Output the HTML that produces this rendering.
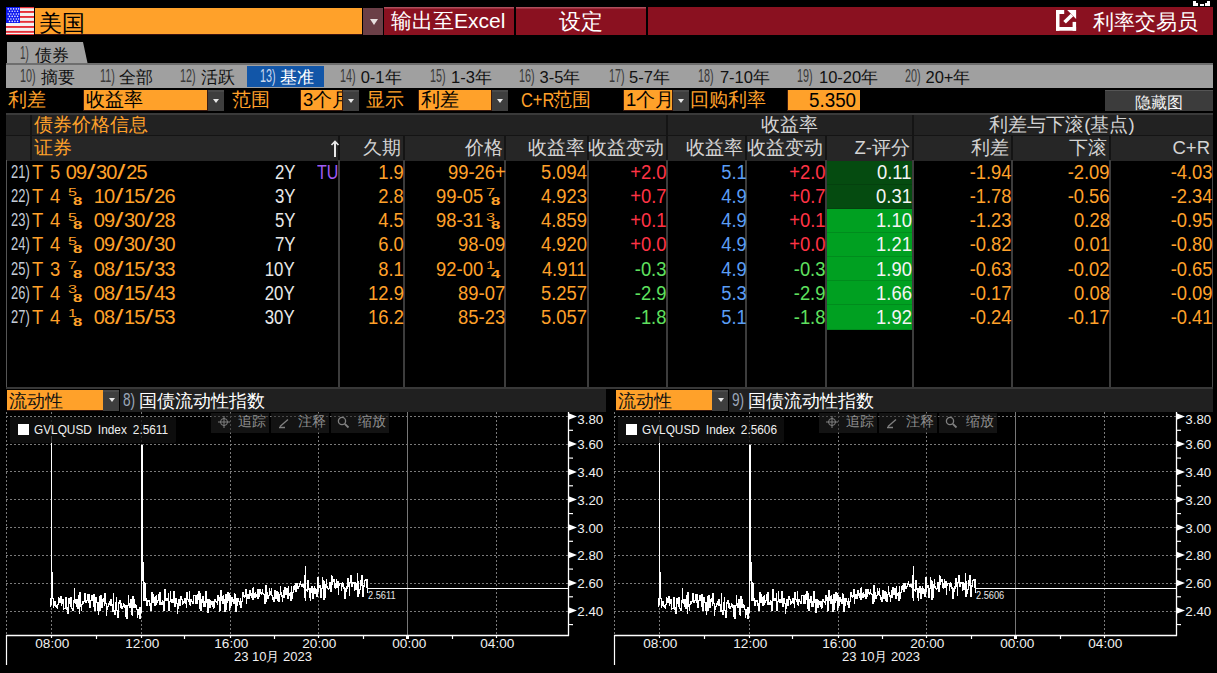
<!DOCTYPE html><html><head><meta charset="utf-8"><style>
*{margin:0;padding:0;box-sizing:border-box}
html,body{width:1217px;height:673px;overflow:hidden;background:#000}
body{position:relative;font-family:"Liberation Sans",sans-serif;color:#fff}
.a{position:absolute;white-space:nowrap}
.l{font-weight:350}
</style></head><body><div class="a" style="left:1193px;top:1px;width:3px;height:5px;background:#fff;"></div>
<div class="a" style="left:1193px;top:3px;width:5px;height:3px;background:#fff;"></div>
<div class="a" style="left:1200px;top:4px;width:4px;height:2px;background:#fff;"></div>
<div class="a" style="left:1207px;top:1px;width:3px;height:5px;background:#fff;"></div>
<div class="a" style="left:1205px;top:3px;width:5px;height:3px;background:#fff;"></div>
<svg class="a" style="left:6px;top:7px" width="28" height="28" viewBox="0 0 28 28"><rect x="0" y="0" width="28" height="28" fill="#f2f2f2"/><rect x="0" y="0" width="28" height="1.2" fill="#e63038"/><rect x="0" y="4" width="28" height="1.9" fill="#e63038"/><rect x="0" y="9" width="28" height="1.9" fill="#e63038"/><rect x="0" y="13.9" width="28" height="1.9" fill="#e63038"/><rect x="0" y="19" width="28" height="1.9" fill="#e63038"/><rect x="0" y="23.9" width="28" height="1.9" fill="#e63038"/><rect x="0" y="27" width="28" height="1" fill="#e63038"/><rect x="0" y="0" width="14" height="16" fill="#0c18f0"/><circle cx="2.2" cy="1.9" r="0.8" fill="#e8e8ff"/><circle cx="4.9" cy="1.9" r="0.8" fill="#e8e8ff"/><circle cx="7.6" cy="1.9" r="0.8" fill="#e8e8ff"/><circle cx="10.3" cy="1.9" r="0.8" fill="#e8e8ff"/><circle cx="12.6" cy="1.9" r="0.8" fill="#e8e8ff"/><circle cx="3.5" cy="4.3" r="0.8" fill="#e8e8ff"/><circle cx="6.2" cy="4.3" r="0.8" fill="#e8e8ff"/><circle cx="8.9" cy="4.3" r="0.8" fill="#e8e8ff"/><circle cx="11.6" cy="4.3" r="0.8" fill="#e8e8ff"/><circle cx="2.2" cy="7" r="0.8" fill="#e8e8ff"/><circle cx="4.9" cy="7" r="0.8" fill="#e8e8ff"/><circle cx="7.6" cy="7" r="0.8" fill="#e8e8ff"/><circle cx="10.3" cy="7" r="0.8" fill="#e8e8ff"/><circle cx="12.6" cy="7" r="0.8" fill="#e8e8ff"/><circle cx="3.5" cy="9.4" r="0.8" fill="#e8e8ff"/><circle cx="6.2" cy="9.4" r="0.8" fill="#e8e8ff"/><circle cx="8.9" cy="9.4" r="0.8" fill="#e8e8ff"/><circle cx="11.6" cy="9.4" r="0.8" fill="#e8e8ff"/><circle cx="2.2" cy="12" r="0.8" fill="#e8e8ff"/><circle cx="4.9" cy="12" r="0.8" fill="#e8e8ff"/><circle cx="7.6" cy="12" r="0.8" fill="#e8e8ff"/><circle cx="10.3" cy="12" r="0.8" fill="#e8e8ff"/><circle cx="12.6" cy="12" r="0.8" fill="#e8e8ff"/><circle cx="3.5" cy="14.4" r="0.8" fill="#e8e8ff"/><circle cx="6.2" cy="14.4" r="0.8" fill="#e8e8ff"/><circle cx="8.9" cy="14.4" r="0.8" fill="#e8e8ff"/><circle cx="11.6" cy="14.4" r="0.8" fill="#e8e8ff"/></svg>
<div class="a" style="left:35px;top:8px;width:327px;height:27px;background:#ffa12a;border-bottom:1px solid #3a1010;"></div>
<div class="a l" style="left:39px;top:11px;font-size:23px;line-height:24px;color:#000;">美国</div>
<div class="a" style="left:363px;top:8px;width:20px;height:27px;background:#6b3f47;"></div>
<div class="a" style="left:369.5px;top:19px;width:0;height:0;border-left:4.0px solid transparent;border-right:4.0px solid transparent;border-top:6px solid #e8e0e0"></div>
<div class="a" style="left:384px;top:7px;width:130px;height:28px;background:linear-gradient(#b65a68 0px,#a8404f 1px,#8a1120 2.5px);"></div>
<div class="a l" style="left:391px;top:9px;font-size:21px;line-height:24px;color:#fff;">输出至Excel</div>
<div class="a" style="left:516px;top:7px;width:130px;height:28px;background:linear-gradient(#b65a68 0px,#a8404f 1px,#8a1120 2.5px);"></div>
<div class="a l" style="left:381.0px;width:400px;top:10px;font-size:21.5px;line-height:24px;color:#fff;text-align:center;">设定</div>
<div class="a" style="left:648px;top:7px;width:565px;height:28px;background:#8a1120;"></div>
<svg class="a" style="left:1055.8px;top:10.1px" width="21" height="21" viewBox="0 0 21 21">
<rect x="0" y="0" width="3.5" height="20.7" fill="#fff"/><rect x="0" y="17" width="20.1" height="3.7" fill="#fff"/>
<rect x="16.6" y="11.9" width="3.5" height="8.8" fill="#fff"/><rect x="0" y="0" width="8.2" height="4" fill="#fff"/>
<path d="M11.2 0 H20.1 V8.9 Z" fill="#fff"/><path d="M8.6 12.3 L16 4.9" stroke="#fff" stroke-width="3.6"/>
</svg>
<div class="a l" style="left:1093px;top:9.5px;font-size:20.5px;line-height:24px;color:#fff;">利率交易员</div>
<svg class="a" style="left:7px;top:42px" width="81" height="21" viewBox="0 0 81 21"><path d="M0 0 H76 L80.5 21 H0 Z" fill="#a0a0a0"/></svg>
<div class="a " style="left:20px;top:42.5px;font-size:18px;line-height:20px;color:#3a3a3a;transform:scaleX(0.55);transform-origin:left center;">1)</div>
<div class="a l" style="left:34.5px;top:44.5px;font-size:16.5px;line-height:20px;color:#111;">债券</div>
<div class="a" style="left:6px;top:63px;width:1207px;height:2px;background:#6e6e6e;"></div>
<div class="a" style="left:6px;top:65px;width:1207px;height:23px;background:#a0a0a0;"></div>
<div class="a" style="left:247px;top:66px;width:77px;height:21px;background:#1256a8;"></div>
<div class="a " style="left:20.3px;top:66px;font-size:18px;line-height:20px;color:#3a3a3a;transform:scaleX(0.6);transform-origin:left center;">10)</div>
<div class="a l" style="left:40.7px;top:67px;font-size:16.5px;line-height:20px;color:#111;">摘要</div>
<div class="a " style="left:100.3px;top:66px;font-size:18px;line-height:20px;color:#3a3a3a;transform:scaleX(0.6);transform-origin:left center;">11)</div>
<div class="a l" style="left:119.3px;top:67px;font-size:16.5px;line-height:20px;color:#111;">全部</div>
<div class="a " style="left:179.5px;top:66px;font-size:18px;line-height:20px;color:#3a3a3a;transform:scaleX(0.6);transform-origin:left center;">12)</div>
<div class="a l" style="left:200.6px;top:67px;font-size:16.5px;line-height:20px;color:#111;">活跃</div>
<div class="a " style="left:259.8px;top:66px;font-size:18px;line-height:20px;color:#c8d8f0;transform:scaleX(0.6);transform-origin:left center;">13)</div>
<div class="a l" style="left:280px;top:67px;font-size:16.5px;line-height:20px;color:#fff;">基准</div>
<div class="a " style="left:339.5px;top:66px;font-size:18px;line-height:20px;color:#3a3a3a;transform:scaleX(0.6);transform-origin:left center;">14)</div>
<div class="a l" style="left:360.7px;top:67px;font-size:16.5px;line-height:20px;color:#111;">0-1年</div>
<div class="a " style="left:429.8px;top:66px;font-size:18px;line-height:20px;color:#3a3a3a;transform:scaleX(0.6);transform-origin:left center;">15)</div>
<div class="a l" style="left:451px;top:67px;font-size:16.5px;line-height:20px;color:#111;">1-3年</div>
<div class="a " style="left:519.3px;top:66px;font-size:18px;line-height:20px;color:#3a3a3a;transform:scaleX(0.6);transform-origin:left center;">16)</div>
<div class="a l" style="left:539.6px;top:67px;font-size:16.5px;line-height:20px;color:#111;">3-5年</div>
<div class="a " style="left:608.8px;top:66px;font-size:18px;line-height:20px;color:#3a3a3a;transform:scaleX(0.6);transform-origin:left center;">17)</div>
<div class="a l" style="left:629px;top:67px;font-size:16.5px;line-height:20px;color:#111;">5-7年</div>
<div class="a " style="left:698.3px;top:66px;font-size:18px;line-height:20px;color:#3a3a3a;transform:scaleX(0.6);transform-origin:left center;">18)</div>
<div class="a l" style="left:719.9px;top:67px;font-size:16.5px;line-height:20px;color:#111;">7-10年</div>
<div class="a " style="left:796.8px;top:66px;font-size:18px;line-height:20px;color:#3a3a3a;transform:scaleX(0.6);transform-origin:left center;">19)</div>
<div class="a l" style="left:819px;top:67px;font-size:16.5px;line-height:20px;color:#111;">10-20年</div>
<div class="a " style="left:904.8px;top:66px;font-size:18px;line-height:20px;color:#3a3a3a;transform:scaleX(0.6);transform-origin:left center;">20)</div>
<div class="a l" style="left:925.5px;top:67px;font-size:16.5px;line-height:20px;color:#111;">20+年</div>
<div class="a l" style="left:8px;top:89px;font-size:18.5px;line-height:22px;color:#ffa12a;">利差</div>
<div class="a l" style="left:83px;top:90px;width:125px;height:21px;background:#ffa12a;border-left:1px solid #3a1a10;border-right:1px solid #3a1a10;border-bottom:1px solid #3a1a10;overflow:hidden;font-size:18.5px;line-height:20px;color:#000;padding-left:2px">收益率</div>
<div class="a" style="left:208px;top:90px;width:15.5px;height:21px;background:linear-gradient(#4a4a4a 0,#4a4a4a 2px,#3e3e3e 2px);"></div>
<div class="a" style="left:212.75px;top:98.7px;width:0;height:0;border-left:3.0px solid transparent;border-right:3.0px solid transparent;border-top:4.5px solid #e8e8e8"></div>
<div class="a l" style="left:232px;top:89px;font-size:18.5px;line-height:22px;color:#ffa12a;">范围</div>
<div class="a l" style="left:300px;top:90px;width:43px;height:21px;background:#ffa12a;border-left:1px solid #3a1a10;border-right:1px solid #3a1a10;border-bottom:1px solid #3a1a10;overflow:hidden;font-size:18.5px;line-height:20px;color:#000;padding-left:2px">3个月</div>
<div class="a" style="left:343px;top:90px;width:15.5px;height:21px;background:linear-gradient(#4a4a4a 0,#4a4a4a 2px,#3e3e3e 2px);"></div>
<div class="a" style="left:347.75px;top:98.7px;width:0;height:0;border-left:3.0px solid transparent;border-right:3.0px solid transparent;border-top:4.5px solid #e8e8e8"></div>
<div class="a l" style="left:366px;top:89px;font-size:18.5px;line-height:22px;color:#ffa12a;">显示</div>
<div class="a l" style="left:418px;top:90px;width:74px;height:21px;background:#ffa12a;border-left:1px solid #3a1a10;border-right:1px solid #3a1a10;border-bottom:1px solid #3a1a10;overflow:hidden;font-size:18.5px;line-height:20px;color:#000;padding-left:2px">利差</div>
<div class="a" style="left:492px;top:90px;width:15.5px;height:21px;background:linear-gradient(#4a4a4a 0,#4a4a4a 2px,#3e3e3e 2px);"></div>
<div class="a" style="left:496.75px;top:98.7px;width:0;height:0;border-left:3.0px solid transparent;border-right:3.0px solid transparent;border-top:4.5px solid #e8e8e8"></div>
<div class="a " style="left:520.5px;top:89px;font-size:20px;line-height:22px;color:#ffa12a;transform:scaleX(0.82);transform-origin:left center;">C+R</div>
<div class="a l" style="left:553px;top:89px;font-size:18.5px;line-height:22px;color:#ffa12a;">范围</div>
<div class="a l" style="left:623px;top:90px;width:50px;height:21px;background:#ffa12a;border-left:1px solid #3a1a10;border-right:1px solid #3a1a10;border-bottom:1px solid #3a1a10;overflow:hidden;font-size:18.5px;line-height:20px;color:#000;padding-left:2px">1个月</div>
<div class="a" style="left:673px;top:90px;width:15.5px;height:21px;background:linear-gradient(#4a4a4a 0,#4a4a4a 2px,#3e3e3e 2px);"></div>
<div class="a" style="left:677.75px;top:98.7px;width:0;height:0;border-left:3.0px solid transparent;border-right:3.0px solid transparent;border-top:4.5px solid #e8e8e8"></div>
<div class="a l" style="left:690px;top:89px;font-size:18.5px;line-height:22px;color:#ffa12a;">回购利率</div>
<div class="a" style="left:787px;top:90px;width:73px;height:21px;background:#ffa12a;border-left:1px solid #3a1a10;border-bottom:1px solid #3a1a10;"></div>
<div class="a " style="right:361px;top:89px;font-size:20px;line-height:22px;color:#000;text-align:right;transform:scaleX(0.94);transform-origin:right center;">5.350</div>
<div class="a" style="left:1105px;top:90px;width:108px;height:21px;background:#3c3c3c;border-top:1px solid #555;"></div>
<div class="a l" style="left:959.0px;width:400px;top:92.5px;font-size:16px;line-height:20px;color:#f4f4f4;text-align:center;">隐藏图</div>
<div class="a" style="left:6px;top:113px;width:1207px;height:2px;background:#3a3a3a;"></div>
<div class="a" style="left:6px;top:115px;width:1207px;height:20px;background:#222;"></div>
<div class="a" style="left:6px;top:135px;width:1207px;height:1px;background:#141414;"></div>
<div class="a" style="left:6px;top:136px;width:1207px;height:25px;background:#262626;"></div>
<div class="a" style="left:6px;top:160px;width:1px;height:227px;background:#555;"></div>
<div class="a" style="left:1212px;top:160px;width:1px;height:227px;background:#4a4a4a;"></div>
<div class="a" style="left:6px;top:387px;width:1207px;height:2px;background:#383838;"></div>
<div class="a" style="left:30px;top:115px;width:2px;height:45px;background:#141414;"></div>
<div class="a" style="left:666px;top:115px;width:2px;height:20px;background:#141414;"></div>
<div class="a" style="left:912px;top:115px;width:2px;height:20px;background:#141414;"></div>
<div class="a" style="left:338px;top:136px;width:2px;height:25px;background:#141414;"></div>
<div class="a" style="left:403px;top:136px;width:2px;height:25px;background:#141414;"></div>
<div class="a" style="left:504px;top:136px;width:2px;height:25px;background:#141414;"></div>
<div class="a" style="left:587px;top:136px;width:2px;height:25px;background:#141414;"></div>
<div class="a" style="left:666px;top:136px;width:2px;height:25px;background:#141414;"></div>
<div class="a" style="left:745px;top:136px;width:2px;height:25px;background:#141414;"></div>
<div class="a" style="left:825px;top:136px;width:2px;height:25px;background:#141414;"></div>
<div class="a" style="left:912px;top:136px;width:2px;height:25px;background:#141414;"></div>
<div class="a" style="left:1011px;top:136px;width:2px;height:25px;background:#141414;"></div>
<div class="a" style="left:1109px;top:136px;width:2px;height:25px;background:#141414;"></div>
<div class="a" style="left:338px;top:160px;width:2px;height:227px;background:#3c3c3c;"></div>
<div class="a" style="left:403px;top:160px;width:2px;height:227px;background:#3c3c3c;"></div>
<div class="a" style="left:504px;top:160px;width:2px;height:227px;background:#3c3c3c;"></div>
<div class="a" style="left:587px;top:160px;width:2px;height:227px;background:#3c3c3c;"></div>
<div class="a" style="left:666px;top:160px;width:2px;height:227px;background:#3c3c3c;"></div>
<div class="a" style="left:745px;top:160px;width:2px;height:227px;background:#3c3c3c;"></div>
<div class="a" style="left:825px;top:160px;width:2px;height:227px;background:#3c3c3c;"></div>
<div class="a" style="left:912px;top:160px;width:2px;height:227px;background:#3c3c3c;"></div>
<div class="a" style="left:1011px;top:160px;width:2px;height:227px;background:#3c3c3c;"></div>
<div class="a" style="left:1109px;top:160px;width:2px;height:227px;background:#3c3c3c;"></div>
<div class="a l" style="left:34px;top:114px;font-size:18.5px;line-height:22px;color:#ffa12a;">债券价格信息</div>
<div class="a l" style="left:589.0px;width:400px;top:114px;font-size:18.5px;line-height:22px;color:#d4d4d4;text-align:center;">收益率</div>
<div class="a l" style="left:862.0px;width:400px;top:114px;font-size:18.5px;line-height:22px;color:#d4d4d4;text-align:center;">利差与下滚(基点)</div>
<div class="a l" style="left:34px;top:137px;font-size:18.5px;line-height:22px;color:#ffa12a;">证券</div>
<svg class="a" style="left:330px;top:140px" width="10" height="18" viewBox="0 0 10 18"><path d="M5 2 V17" stroke="#e8e8e8" stroke-width="2"/><path d="M1.5 5 L5 1.5 L8.5 5" stroke="#e8e8e8" stroke-width="1.6" fill="none"/></svg>
<div class="a l" style="right:816px;top:137px;font-size:18.5px;line-height:22px;color:#d4d4d4;text-align:right;">久期</div>
<div class="a l" style="right:714px;top:137px;font-size:18.5px;line-height:22px;color:#d4d4d4;text-align:right;">价格</div>
<div class="a l" style="right:632px;top:137px;font-size:18.5px;line-height:22px;color:#d4d4d4;text-align:right;">收益率</div>
<div class="a l" style="right:553px;top:137px;font-size:18.5px;line-height:22px;color:#d4d4d4;text-align:right;">收益变动</div>
<div class="a l" style="right:474px;top:137px;font-size:18.5px;line-height:22px;color:#d4d4d4;text-align:right;">收益率</div>
<div class="a l" style="right:394px;top:137px;font-size:18.5px;line-height:22px;color:#d4d4d4;text-align:right;">收益变动</div>
<div class="a l" style="right:307px;top:137px;font-size:18.5px;line-height:22px;color:#d4d4d4;text-align:right;">Z-评分</div>
<div class="a l" style="right:208px;top:137px;font-size:18.5px;line-height:22px;color:#d4d4d4;text-align:right;">利差</div>
<div class="a l" style="right:110px;top:137px;font-size:18.5px;line-height:22px;color:#d4d4d4;text-align:right;">下滚</div>
<div class="a l" style="right:7px;top:137px;font-size:18.5px;line-height:22px;color:#d4d4d4;text-align:right;">C+R</div>
<div class="a" style="left:827px;top:161.0px;width:85px;height:24.1px;background:#054b10;border-bottom:1px solid rgba(0,0,0,0.12);"></div>
<div class="a " style="left:10.5px;top:160.0px;font-size:18.5px;line-height:24px;color:#c4ccd8;transform:scaleX(0.7);transform-origin:left center;">21)</div>
<div class="a " style="left:32px;top:160.0px;font-size:20px;line-height:24px;color:#ffa12a;transform:scaleX(0.92);transform-origin:left center;">T</div>
<div class="a " style="left:49.5px;top:160.0px;font-size:20px;line-height:24px;color:#ffa12a;transform:scaleX(0.92);transform-origin:left center;">5</div>
<div class="a" style="left:65.8px;top:160.0px;font-size:20px;line-height:24px;color:#ffa12a"><span style="display:inline-block;transform:scaleX(0.92)"></span><span style="display:inline-block;width:10.1px;text-align:center">0</span><span style="display:inline-block;width:10.1px;text-align:center">9</span><span style="display:inline-block;width:10.1px;text-align:center;transform:scaleX(1.5)">/</span><span style="display:inline-block;width:10.1px;text-align:center">3</span><span style="display:inline-block;width:10.1px;text-align:center">0</span><span style="display:inline-block;width:10.1px;text-align:center;transform:scaleX(1.5)">/</span><span style="display:inline-block;width:10.1px;text-align:center">2</span><span style="display:inline-block;width:10.1px;text-align:center">5</span></div>
<div class="a " style="right:922px;top:160.0px;font-size:20px;line-height:24px;color:#e8e8e8;text-align:right;transform:scaleX(0.84);transform-origin:right center;">2Y</div>
<div class="a " style="left:317px;top:160.0px;font-size:20px;line-height:24px;color:#a05cf4;transform:scaleX(0.8);transform-origin:left center;">TU</div>
<div class="a " style="right:813px;top:160.0px;font-size:20px;line-height:24px;color:#ffa12a;text-align:right;transform:scaleX(0.92);transform-origin:right center;">1.9</div>
<div class="a " style="right:711.5px;top:160.0px;font-size:20px;line-height:24px;color:#ffa12a;text-align:right;transform:scaleX(0.92);transform-origin:right center;">99-26+</div>
<div class="a " style="right:630px;top:160.0px;font-size:20px;line-height:24px;color:#ffa12a;text-align:right;transform:scaleX(0.92);transform-origin:right center;">5.094</div>
<div class="a " style="right:550.7px;top:160.0px;font-size:20px;line-height:24px;color:#ff3345;text-align:right;transform:scaleX(0.92);transform-origin:right center;">+2.0</div>
<div class="a " style="right:470px;top:160.0px;font-size:20px;line-height:24px;color:#5b9ef5;text-align:right;transform:scaleX(0.92);transform-origin:right center;">5.1</div>
<div class="a " style="right:391.70000000000005px;top:160.0px;font-size:20px;line-height:24px;color:#ff3345;text-align:right;transform:scaleX(0.92);transform-origin:right center;">+2.0</div>
<div class="a " style="right:305.5px;top:160.0px;font-size:20px;line-height:24px;color:#f4f4f4;text-align:right;transform:scaleX(0.92);transform-origin:right center;">0.11</div>
<div class="a " style="right:205px;top:160.0px;font-size:20px;line-height:24px;color:#ffa12a;text-align:right;transform:scaleX(0.92);transform-origin:right center;">-1.94</div>
<div class="a " style="right:107px;top:160.0px;font-size:20px;line-height:24px;color:#ffa12a;text-align:right;transform:scaleX(0.92);transform-origin:right center;">-2.09</div>
<div class="a " style="right:4px;top:160.0px;font-size:20px;line-height:24px;color:#ffa12a;text-align:right;transform:scaleX(0.92);transform-origin:right center;">-4.03</div>
<div class="a" style="left:827px;top:185.07px;width:85px;height:24.1px;background:#054b10;border-bottom:1px solid rgba(0,0,0,0.12);"></div>
<div class="a " style="left:10.5px;top:184.15px;font-size:18.5px;line-height:24px;color:#c4ccd8;transform:scaleX(0.7);transform-origin:left center;">22)</div>
<div class="a " style="left:32px;top:184.15px;font-size:20px;line-height:24px;color:#ffa12a;transform:scaleX(0.92);transform-origin:left center;">T</div>
<div class="a " style="left:49.5px;top:184.15px;font-size:20px;line-height:24px;color:#ffa12a;transform:scaleX(0.92);transform-origin:left center;">4</div>
<div class="a" style="left:67.8px;top:186.45000000000002px;font-size:11.5px;line-height:12px;color:#ffa12a;transform:scaleX(1.4);transform-origin:left center">5</div>
<div class="a" style="left:73.2px;top:195.15px;font-size:11.5px;line-height:12px;color:#ffa12a;font-weight:bold;transform:scaleX(1.45);transform-origin:left center">8</div>
<div class="a" style="left:93.8px;top:184.15px;font-size:20px;line-height:24px;color:#ffa12a"><span style="display:inline-block;transform:scaleX(0.92)"></span><span style="display:inline-block;width:10.1px;text-align:center">1</span><span style="display:inline-block;width:10.1px;text-align:center">0</span><span style="display:inline-block;width:10.1px;text-align:center;transform:scaleX(1.5)">/</span><span style="display:inline-block;width:10.1px;text-align:center">1</span><span style="display:inline-block;width:10.1px;text-align:center">5</span><span style="display:inline-block;width:10.1px;text-align:center;transform:scaleX(1.5)">/</span><span style="display:inline-block;width:10.1px;text-align:center">2</span><span style="display:inline-block;width:10.1px;text-align:center">6</span></div>
<div class="a " style="right:922px;top:184.15px;font-size:20px;line-height:24px;color:#e8e8e8;text-align:right;transform:scaleX(0.84);transform-origin:right center;">3Y</div>
<div class="a " style="right:813px;top:184.15px;font-size:20px;line-height:24px;color:#ffa12a;text-align:right;transform:scaleX(0.92);transform-origin:right center;">2.8</div>
<div class="a " style="right:733.5px;top:184.15px;font-size:20px;line-height:24px;color:#ffa12a;text-align:right;transform:scaleX(0.92);transform-origin:right center;">99-05</div>
<div class="a" style="left:485.8px;top:186.45000000000002px;font-size:11.5px;line-height:12px;color:#ffa12a;transform:scaleX(1.4);transform-origin:left center">7</div>
<div class="a" style="left:491.2px;top:195.15px;font-size:11.5px;line-height:12px;color:#ffa12a;font-weight:bold;transform:scaleX(1.45);transform-origin:left center">8</div>
<div class="a " style="right:630px;top:184.15px;font-size:20px;line-height:24px;color:#ffa12a;text-align:right;transform:scaleX(0.92);transform-origin:right center;">4.923</div>
<div class="a " style="right:550.7px;top:184.15px;font-size:20px;line-height:24px;color:#ff3345;text-align:right;transform:scaleX(0.92);transform-origin:right center;">+0.7</div>
<div class="a " style="right:470px;top:184.15px;font-size:20px;line-height:24px;color:#5b9ef5;text-align:right;transform:scaleX(0.92);transform-origin:right center;">4.9</div>
<div class="a " style="right:391.70000000000005px;top:184.15px;font-size:20px;line-height:24px;color:#ff3345;text-align:right;transform:scaleX(0.92);transform-origin:right center;">+0.7</div>
<div class="a " style="right:305.5px;top:184.15px;font-size:20px;line-height:24px;color:#f4f4f4;text-align:right;transform:scaleX(0.92);transform-origin:right center;">0.31</div>
<div class="a " style="right:205px;top:184.15px;font-size:20px;line-height:24px;color:#ffa12a;text-align:right;transform:scaleX(0.92);transform-origin:right center;">-1.78</div>
<div class="a " style="right:107px;top:184.15px;font-size:20px;line-height:24px;color:#ffa12a;text-align:right;transform:scaleX(0.92);transform-origin:right center;">-0.56</div>
<div class="a " style="right:4px;top:184.15px;font-size:20px;line-height:24px;color:#ffa12a;text-align:right;transform:scaleX(0.92);transform-origin:right center;">-2.34</div>
<div class="a" style="left:827px;top:209.14px;width:85px;height:24.1px;background:#00a021;border-bottom:1px solid rgba(0,0,0,0.12);"></div>
<div class="a " style="left:10.5px;top:208.3px;font-size:18.5px;line-height:24px;color:#c4ccd8;transform:scaleX(0.7);transform-origin:left center;">23)</div>
<div class="a " style="left:32px;top:208.3px;font-size:20px;line-height:24px;color:#ffa12a;transform:scaleX(0.92);transform-origin:left center;">T</div>
<div class="a " style="left:49.5px;top:208.3px;font-size:20px;line-height:24px;color:#ffa12a;transform:scaleX(0.92);transform-origin:left center;">4</div>
<div class="a" style="left:67.8px;top:210.60000000000002px;font-size:11.5px;line-height:12px;color:#ffa12a;transform:scaleX(1.4);transform-origin:left center">5</div>
<div class="a" style="left:73.2px;top:219.3px;font-size:11.5px;line-height:12px;color:#ffa12a;font-weight:bold;transform:scaleX(1.45);transform-origin:left center">8</div>
<div class="a" style="left:93.8px;top:208.3px;font-size:20px;line-height:24px;color:#ffa12a"><span style="display:inline-block;transform:scaleX(0.92)"></span><span style="display:inline-block;width:10.1px;text-align:center">0</span><span style="display:inline-block;width:10.1px;text-align:center">9</span><span style="display:inline-block;width:10.1px;text-align:center;transform:scaleX(1.5)">/</span><span style="display:inline-block;width:10.1px;text-align:center">3</span><span style="display:inline-block;width:10.1px;text-align:center">0</span><span style="display:inline-block;width:10.1px;text-align:center;transform:scaleX(1.5)">/</span><span style="display:inline-block;width:10.1px;text-align:center">2</span><span style="display:inline-block;width:10.1px;text-align:center">8</span></div>
<div class="a " style="right:922px;top:208.3px;font-size:20px;line-height:24px;color:#e8e8e8;text-align:right;transform:scaleX(0.84);transform-origin:right center;">5Y</div>
<div class="a " style="right:813px;top:208.3px;font-size:20px;line-height:24px;color:#ffa12a;text-align:right;transform:scaleX(0.92);transform-origin:right center;">4.5</div>
<div class="a " style="right:733.5px;top:208.3px;font-size:20px;line-height:24px;color:#ffa12a;text-align:right;transform:scaleX(0.92);transform-origin:right center;">98-31</div>
<div class="a" style="left:485.8px;top:210.60000000000002px;font-size:11.5px;line-height:12px;color:#ffa12a;transform:scaleX(1.4);transform-origin:left center">3</div>
<div class="a" style="left:491.2px;top:219.3px;font-size:11.5px;line-height:12px;color:#ffa12a;font-weight:bold;transform:scaleX(1.45);transform-origin:left center">8</div>
<div class="a " style="right:630px;top:208.3px;font-size:20px;line-height:24px;color:#ffa12a;text-align:right;transform:scaleX(0.92);transform-origin:right center;">4.859</div>
<div class="a " style="right:550.7px;top:208.3px;font-size:20px;line-height:24px;color:#ff3345;text-align:right;transform:scaleX(0.92);transform-origin:right center;">+0.1</div>
<div class="a " style="right:470px;top:208.3px;font-size:20px;line-height:24px;color:#5b9ef5;text-align:right;transform:scaleX(0.92);transform-origin:right center;">4.9</div>
<div class="a " style="right:391.70000000000005px;top:208.3px;font-size:20px;line-height:24px;color:#ff3345;text-align:right;transform:scaleX(0.92);transform-origin:right center;">+0.1</div>
<div class="a " style="right:305.5px;top:208.3px;font-size:20px;line-height:24px;color:#f4f4f4;text-align:right;transform:scaleX(0.92);transform-origin:right center;">1.10</div>
<div class="a " style="right:205px;top:208.3px;font-size:20px;line-height:24px;color:#ffa12a;text-align:right;transform:scaleX(0.92);transform-origin:right center;">-1.23</div>
<div class="a " style="right:107px;top:208.3px;font-size:20px;line-height:24px;color:#ffa12a;text-align:right;transform:scaleX(0.92);transform-origin:right center;">0.28</div>
<div class="a " style="right:4px;top:208.3px;font-size:20px;line-height:24px;color:#ffa12a;text-align:right;transform:scaleX(0.92);transform-origin:right center;">-0.95</div>
<div class="a" style="left:827px;top:233.21px;width:85px;height:24.1px;background:#00a021;border-bottom:1px solid rgba(0,0,0,0.12);"></div>
<div class="a " style="left:10.5px;top:232.45px;font-size:18.5px;line-height:24px;color:#c4ccd8;transform:scaleX(0.7);transform-origin:left center;">24)</div>
<div class="a " style="left:32px;top:232.45px;font-size:20px;line-height:24px;color:#ffa12a;transform:scaleX(0.92);transform-origin:left center;">T</div>
<div class="a " style="left:49.5px;top:232.45px;font-size:20px;line-height:24px;color:#ffa12a;transform:scaleX(0.92);transform-origin:left center;">4</div>
<div class="a" style="left:67.8px;top:234.75px;font-size:11.5px;line-height:12px;color:#ffa12a;transform:scaleX(1.4);transform-origin:left center">5</div>
<div class="a" style="left:73.2px;top:243.45px;font-size:11.5px;line-height:12px;color:#ffa12a;font-weight:bold;transform:scaleX(1.45);transform-origin:left center">8</div>
<div class="a" style="left:93.8px;top:232.45px;font-size:20px;line-height:24px;color:#ffa12a"><span style="display:inline-block;transform:scaleX(0.92)"></span><span style="display:inline-block;width:10.1px;text-align:center">0</span><span style="display:inline-block;width:10.1px;text-align:center">9</span><span style="display:inline-block;width:10.1px;text-align:center;transform:scaleX(1.5)">/</span><span style="display:inline-block;width:10.1px;text-align:center">3</span><span style="display:inline-block;width:10.1px;text-align:center">0</span><span style="display:inline-block;width:10.1px;text-align:center;transform:scaleX(1.5)">/</span><span style="display:inline-block;width:10.1px;text-align:center">3</span><span style="display:inline-block;width:10.1px;text-align:center">0</span></div>
<div class="a " style="right:922px;top:232.45px;font-size:20px;line-height:24px;color:#e8e8e8;text-align:right;transform:scaleX(0.84);transform-origin:right center;">7Y</div>
<div class="a " style="right:813px;top:232.45px;font-size:20px;line-height:24px;color:#ffa12a;text-align:right;transform:scaleX(0.92);transform-origin:right center;">6.0</div>
<div class="a " style="right:711.5px;top:232.45px;font-size:20px;line-height:24px;color:#ffa12a;text-align:right;transform:scaleX(0.92);transform-origin:right center;">98-09</div>
<div class="a " style="right:630px;top:232.45px;font-size:20px;line-height:24px;color:#ffa12a;text-align:right;transform:scaleX(0.92);transform-origin:right center;">4.920</div>
<div class="a " style="right:550.7px;top:232.45px;font-size:20px;line-height:24px;color:#ff3345;text-align:right;transform:scaleX(0.92);transform-origin:right center;">+0.0</div>
<div class="a " style="right:470px;top:232.45px;font-size:20px;line-height:24px;color:#5b9ef5;text-align:right;transform:scaleX(0.92);transform-origin:right center;">4.9</div>
<div class="a " style="right:391.70000000000005px;top:232.45px;font-size:20px;line-height:24px;color:#ff3345;text-align:right;transform:scaleX(0.92);transform-origin:right center;">+0.0</div>
<div class="a " style="right:305.5px;top:232.45px;font-size:20px;line-height:24px;color:#f4f4f4;text-align:right;transform:scaleX(0.92);transform-origin:right center;">1.21</div>
<div class="a " style="right:205px;top:232.45px;font-size:20px;line-height:24px;color:#ffa12a;text-align:right;transform:scaleX(0.92);transform-origin:right center;">-0.82</div>
<div class="a " style="right:107px;top:232.45px;font-size:20px;line-height:24px;color:#ffa12a;text-align:right;transform:scaleX(0.92);transform-origin:right center;">0.01</div>
<div class="a " style="right:4px;top:232.45px;font-size:20px;line-height:24px;color:#ffa12a;text-align:right;transform:scaleX(0.92);transform-origin:right center;">-0.80</div>
<div class="a" style="left:827px;top:257.28px;width:85px;height:24.1px;background:#00a021;border-bottom:1px solid rgba(0,0,0,0.12);"></div>
<div class="a " style="left:10.5px;top:256.6px;font-size:18.5px;line-height:24px;color:#c4ccd8;transform:scaleX(0.7);transform-origin:left center;">25)</div>
<div class="a " style="left:32px;top:256.6px;font-size:20px;line-height:24px;color:#ffa12a;transform:scaleX(0.92);transform-origin:left center;">T</div>
<div class="a " style="left:49.5px;top:256.6px;font-size:20px;line-height:24px;color:#ffa12a;transform:scaleX(0.92);transform-origin:left center;">3</div>
<div class="a" style="left:67.8px;top:258.90000000000003px;font-size:11.5px;line-height:12px;color:#ffa12a;transform:scaleX(1.4);transform-origin:left center">7</div>
<div class="a" style="left:73.2px;top:267.6px;font-size:11.5px;line-height:12px;color:#ffa12a;font-weight:bold;transform:scaleX(1.45);transform-origin:left center">8</div>
<div class="a" style="left:93.8px;top:256.6px;font-size:20px;line-height:24px;color:#ffa12a"><span style="display:inline-block;transform:scaleX(0.92)"></span><span style="display:inline-block;width:10.1px;text-align:center">0</span><span style="display:inline-block;width:10.1px;text-align:center">8</span><span style="display:inline-block;width:10.1px;text-align:center;transform:scaleX(1.5)">/</span><span style="display:inline-block;width:10.1px;text-align:center">1</span><span style="display:inline-block;width:10.1px;text-align:center">5</span><span style="display:inline-block;width:10.1px;text-align:center;transform:scaleX(1.5)">/</span><span style="display:inline-block;width:10.1px;text-align:center">3</span><span style="display:inline-block;width:10.1px;text-align:center">3</span></div>
<div class="a " style="right:922px;top:256.6px;font-size:20px;line-height:24px;color:#e8e8e8;text-align:right;transform:scaleX(0.84);transform-origin:right center;">10Y</div>
<div class="a " style="right:813px;top:256.6px;font-size:20px;line-height:24px;color:#ffa12a;text-align:right;transform:scaleX(0.92);transform-origin:right center;">8.1</div>
<div class="a " style="right:733.5px;top:256.6px;font-size:20px;line-height:24px;color:#ffa12a;text-align:right;transform:scaleX(0.92);transform-origin:right center;">92-00</div>
<div class="a" style="left:485.8px;top:258.90000000000003px;font-size:11.5px;line-height:12px;color:#ffa12a;transform:scaleX(1.4);transform-origin:left center">1</div>
<div class="a" style="left:491.2px;top:267.6px;font-size:11.5px;line-height:12px;color:#ffa12a;font-weight:bold;transform:scaleX(1.45);transform-origin:left center">4</div>
<div class="a " style="right:630px;top:256.6px;font-size:20px;line-height:24px;color:#ffa12a;text-align:right;transform:scaleX(0.92);transform-origin:right center;">4.911</div>
<div class="a " style="right:550.7px;top:256.6px;font-size:20px;line-height:24px;color:#5fe05f;text-align:right;transform:scaleX(0.92);transform-origin:right center;">-0.3</div>
<div class="a " style="right:470px;top:256.6px;font-size:20px;line-height:24px;color:#5b9ef5;text-align:right;transform:scaleX(0.92);transform-origin:right center;">4.9</div>
<div class="a " style="right:391.70000000000005px;top:256.6px;font-size:20px;line-height:24px;color:#5fe05f;text-align:right;transform:scaleX(0.92);transform-origin:right center;">-0.3</div>
<div class="a " style="right:305.5px;top:256.6px;font-size:20px;line-height:24px;color:#f4f4f4;text-align:right;transform:scaleX(0.92);transform-origin:right center;">1.90</div>
<div class="a " style="right:205px;top:256.6px;font-size:20px;line-height:24px;color:#ffa12a;text-align:right;transform:scaleX(0.92);transform-origin:right center;">-0.63</div>
<div class="a " style="right:107px;top:256.6px;font-size:20px;line-height:24px;color:#ffa12a;text-align:right;transform:scaleX(0.92);transform-origin:right center;">-0.02</div>
<div class="a " style="right:4px;top:256.6px;font-size:20px;line-height:24px;color:#ffa12a;text-align:right;transform:scaleX(0.92);transform-origin:right center;">-0.65</div>
<div class="a" style="left:827px;top:281.35px;width:85px;height:24.1px;background:#00a021;border-bottom:1px solid rgba(0,0,0,0.12);"></div>
<div class="a " style="left:10.5px;top:280.75px;font-size:18.5px;line-height:24px;color:#c4ccd8;transform:scaleX(0.7);transform-origin:left center;">26)</div>
<div class="a " style="left:32px;top:280.75px;font-size:20px;line-height:24px;color:#ffa12a;transform:scaleX(0.92);transform-origin:left center;">T</div>
<div class="a " style="left:49.5px;top:280.75px;font-size:20px;line-height:24px;color:#ffa12a;transform:scaleX(0.92);transform-origin:left center;">4</div>
<div class="a" style="left:67.8px;top:283.05px;font-size:11.5px;line-height:12px;color:#ffa12a;transform:scaleX(1.4);transform-origin:left center">3</div>
<div class="a" style="left:73.2px;top:291.75px;font-size:11.5px;line-height:12px;color:#ffa12a;font-weight:bold;transform:scaleX(1.45);transform-origin:left center">8</div>
<div class="a" style="left:93.8px;top:280.75px;font-size:20px;line-height:24px;color:#ffa12a"><span style="display:inline-block;transform:scaleX(0.92)"></span><span style="display:inline-block;width:10.1px;text-align:center">0</span><span style="display:inline-block;width:10.1px;text-align:center">8</span><span style="display:inline-block;width:10.1px;text-align:center;transform:scaleX(1.5)">/</span><span style="display:inline-block;width:10.1px;text-align:center">1</span><span style="display:inline-block;width:10.1px;text-align:center">5</span><span style="display:inline-block;width:10.1px;text-align:center;transform:scaleX(1.5)">/</span><span style="display:inline-block;width:10.1px;text-align:center">4</span><span style="display:inline-block;width:10.1px;text-align:center">3</span></div>
<div class="a " style="right:922px;top:280.75px;font-size:20px;line-height:24px;color:#e8e8e8;text-align:right;transform:scaleX(0.84);transform-origin:right center;">20Y</div>
<div class="a " style="right:813px;top:280.75px;font-size:20px;line-height:24px;color:#ffa12a;text-align:right;transform:scaleX(0.92);transform-origin:right center;">12.9</div>
<div class="a " style="right:711.5px;top:280.75px;font-size:20px;line-height:24px;color:#ffa12a;text-align:right;transform:scaleX(0.92);transform-origin:right center;">89-07</div>
<div class="a " style="right:630px;top:280.75px;font-size:20px;line-height:24px;color:#ffa12a;text-align:right;transform:scaleX(0.92);transform-origin:right center;">5.257</div>
<div class="a " style="right:550.7px;top:280.75px;font-size:20px;line-height:24px;color:#5fe05f;text-align:right;transform:scaleX(0.92);transform-origin:right center;">-2.9</div>
<div class="a " style="right:470px;top:280.75px;font-size:20px;line-height:24px;color:#5b9ef5;text-align:right;transform:scaleX(0.92);transform-origin:right center;">5.3</div>
<div class="a " style="right:391.70000000000005px;top:280.75px;font-size:20px;line-height:24px;color:#5fe05f;text-align:right;transform:scaleX(0.92);transform-origin:right center;">-2.9</div>
<div class="a " style="right:305.5px;top:280.75px;font-size:20px;line-height:24px;color:#f4f4f4;text-align:right;transform:scaleX(0.92);transform-origin:right center;">1.66</div>
<div class="a " style="right:205px;top:280.75px;font-size:20px;line-height:24px;color:#ffa12a;text-align:right;transform:scaleX(0.92);transform-origin:right center;">-0.17</div>
<div class="a " style="right:107px;top:280.75px;font-size:20px;line-height:24px;color:#ffa12a;text-align:right;transform:scaleX(0.92);transform-origin:right center;">0.08</div>
<div class="a " style="right:4px;top:280.75px;font-size:20px;line-height:24px;color:#ffa12a;text-align:right;transform:scaleX(0.92);transform-origin:right center;">-0.09</div>
<div class="a" style="left:827px;top:305.42px;width:85px;height:24.1px;background:#00a021;border-bottom:1px solid rgba(0,0,0,0.12);"></div>
<div class="a " style="left:10.5px;top:304.9px;font-size:18.5px;line-height:24px;color:#c4ccd8;transform:scaleX(0.7);transform-origin:left center;">27)</div>
<div class="a " style="left:32px;top:304.9px;font-size:20px;line-height:24px;color:#ffa12a;transform:scaleX(0.92);transform-origin:left center;">T</div>
<div class="a " style="left:49.5px;top:304.9px;font-size:20px;line-height:24px;color:#ffa12a;transform:scaleX(0.92);transform-origin:left center;">4</div>
<div class="a" style="left:67.8px;top:307.2px;font-size:11.5px;line-height:12px;color:#ffa12a;transform:scaleX(1.4);transform-origin:left center">1</div>
<div class="a" style="left:73.2px;top:315.9px;font-size:11.5px;line-height:12px;color:#ffa12a;font-weight:bold;transform:scaleX(1.45);transform-origin:left center">8</div>
<div class="a" style="left:93.8px;top:304.9px;font-size:20px;line-height:24px;color:#ffa12a"><span style="display:inline-block;transform:scaleX(0.92)"></span><span style="display:inline-block;width:10.1px;text-align:center">0</span><span style="display:inline-block;width:10.1px;text-align:center">8</span><span style="display:inline-block;width:10.1px;text-align:center;transform:scaleX(1.5)">/</span><span style="display:inline-block;width:10.1px;text-align:center">1</span><span style="display:inline-block;width:10.1px;text-align:center">5</span><span style="display:inline-block;width:10.1px;text-align:center;transform:scaleX(1.5)">/</span><span style="display:inline-block;width:10.1px;text-align:center">5</span><span style="display:inline-block;width:10.1px;text-align:center">3</span></div>
<div class="a " style="right:922px;top:304.9px;font-size:20px;line-height:24px;color:#e8e8e8;text-align:right;transform:scaleX(0.84);transform-origin:right center;">30Y</div>
<div class="a " style="right:813px;top:304.9px;font-size:20px;line-height:24px;color:#ffa12a;text-align:right;transform:scaleX(0.92);transform-origin:right center;">16.2</div>
<div class="a " style="right:711.5px;top:304.9px;font-size:20px;line-height:24px;color:#ffa12a;text-align:right;transform:scaleX(0.92);transform-origin:right center;">85-23</div>
<div class="a " style="right:630px;top:304.9px;font-size:20px;line-height:24px;color:#ffa12a;text-align:right;transform:scaleX(0.92);transform-origin:right center;">5.057</div>
<div class="a " style="right:550.7px;top:304.9px;font-size:20px;line-height:24px;color:#5fe05f;text-align:right;transform:scaleX(0.92);transform-origin:right center;">-1.8</div>
<div class="a " style="right:470px;top:304.9px;font-size:20px;line-height:24px;color:#5b9ef5;text-align:right;transform:scaleX(0.92);transform-origin:right center;">5.1</div>
<div class="a " style="right:391.70000000000005px;top:304.9px;font-size:20px;line-height:24px;color:#5fe05f;text-align:right;transform:scaleX(0.92);transform-origin:right center;">-1.8</div>
<div class="a " style="right:305.5px;top:304.9px;font-size:20px;line-height:24px;color:#f4f4f4;text-align:right;transform:scaleX(0.92);transform-origin:right center;">1.92</div>
<div class="a " style="right:205px;top:304.9px;font-size:20px;line-height:24px;color:#ffa12a;text-align:right;transform:scaleX(0.92);transform-origin:right center;">-0.24</div>
<div class="a " style="right:107px;top:304.9px;font-size:20px;line-height:24px;color:#ffa12a;text-align:right;transform:scaleX(0.92);transform-origin:right center;">-0.17</div>
<div class="a " style="right:4px;top:304.9px;font-size:20px;line-height:24px;color:#ffa12a;text-align:right;transform:scaleX(0.92);transform-origin:right center;">-0.41</div>
<div class="a" style="left:120px;top:389px;width:486px;height:23px;background:#202020"></div>
<div class="a" style="left:7px;top:390px;width:96px;height:21px;background:#ffa12a;border-bottom:1px solid #3a1a10;"></div>
<div class="a l" style="left:9px;top:390px;font-size:18px;line-height:22px;color:#111;">流动性</div>
<div class="a" style="left:103px;top:390px;width:16px;height:21px;background:linear-gradient(#4a4a4a 0,#4a4a4a 2px,#3e3e3e 2px);"></div>
<div class="a" style="left:108.5px;top:398.3px;width:0;height:0;border-left:3.0px solid transparent;border-right:3.0px solid transparent;border-top:4.5px solid #e8e8e8"></div>
<div class="a " style="left:123px;top:389px;font-size:19px;line-height:22px;color:#9aa6b8;transform:scaleX(0.72);transform-origin:left center;">8)</div>
<div class="a l" style="left:139px;top:389.5px;font-size:18px;line-height:22px;color:#fff;">国债流动性指数</div>
<svg class="a" style="left:0px;top:0px" width="612" height="673" viewBox="0 0 612 673"><line x1="6.5" y1="412" x2="6.5" y2="635" stroke="#7a7a7a" stroke-dasharray="2 2"/><line x1="51.5" y1="412" x2="51.5" y2="635" stroke="#7a7a7a" stroke-dasharray="2 2"/><line x1="141.5" y1="412" x2="141.5" y2="635" stroke="#7a7a7a" stroke-dasharray="2 2"/><line x1="230.5" y1="412" x2="230.5" y2="635" stroke="#7a7a7a" stroke-dasharray="2 2"/><line x1="318.5" y1="412" x2="318.5" y2="635" stroke="#7a7a7a" stroke-dasharray="2 2"/><line x1="496.5" y1="412" x2="496.5" y2="635" stroke="#7a7a7a" stroke-dasharray="2 2"/><line x1="407.5" y1="412" x2="407.5" y2="635" stroke="#777"/><line x1="6" y1="416.5" x2="568" y2="416.5" stroke="#7a7a7a" stroke-dasharray="2 2"/><line x1="6" y1="444.5" x2="568" y2="444.5" stroke="#7a7a7a" stroke-dasharray="2 2"/><line x1="6" y1="471.5" x2="568" y2="471.5" stroke="#7a7a7a" stroke-dasharray="2 2"/><line x1="6" y1="499.5" x2="568" y2="499.5" stroke="#7a7a7a" stroke-dasharray="2 2"/><line x1="6" y1="527.5" x2="568" y2="527.5" stroke="#7a7a7a" stroke-dasharray="2 2"/><line x1="6" y1="555.5" x2="568" y2="555.5" stroke="#7a7a7a" stroke-dasharray="2 2"/><line x1="6" y1="583.5" x2="568" y2="583.5" stroke="#7a7a7a" stroke-dasharray="2 2"/><line x1="6" y1="611.5" x2="568" y2="611.5" stroke="#7a7a7a" stroke-dasharray="2 2"/><path d="M50.5 598 V607 M51.5 436 V605 M52.5 572 V599 M53.5 598 V608 M54.5 601 V606 M55.5 601 V607 M56.5 605 V608 M57.5 604 V609 M58.5 597 V605 M59.5 598 V603 M60.5 596 V603 M61.5 596 V606 M62.5 599 V604 M63.5 599 V610 M64.5 608 V609 M65.5 597 V609 M66.5 597 V610 M67.5 607 V614 M68.5 598 V614 M69.5 598 V604 M70.5 597 V607 M71.5 597 V609 M72.5 608 V611 M73.5 600 V611 M74.5 588 V603 M75.5 599 V604 M76.5 599 V607 M77.5 599 V609 M78.5 595 V609 M79.5 592 V614 M80.5 592 V607 M81.5 604 V611 M82.5 601 V605 M83.5 601 V604 M84.5 593 V602 M85.5 593 V603 M86.5 600 V603 M87.5 594 V601 M88.5 594 V603 M89.5 594 V608 M90.5 600 V608 M91.5 595 V601 M92.5 595 V601 M93.5 594 V607 M94.5 594 V611 M95.5 597 V611 M96.5 597 V603 M97.5 602 V611 M98.5 602 V615 M99.5 596 V611 M100.5 595 V611 M101.5 595 V608 M102.5 599 V608 M103.5 598 V602 M104.5 593 V606 M105.5 593 V604 M106.5 603 V616 M107.5 606 V610 M108.5 603 V607 M109.5 601 V605 M110.5 599 V606 M111.5 599 V606 M112.5 604 V612 M113.5 593 V612 M114.5 610 V615 M115.5 602 V615 M116.5 597 V611 M117.5 610 V618 M118.5 602 V618 M119.5 600 V604 M120.5 600 V608 M121.5 603 V609 M122.5 606 V609 M123.5 603 V607 M124.5 604 V608 M125.5 605 V617 M126.5 605 V619 M127.5 605 V619 M128.5 595 V606 M129.5 603 V608 M130.5 599 V608 M131.5 599 V615 M132.5 596 V616 M133.5 596 V608 M134.5 599 V608 M135.5 604 V608 M136.5 605 V610 M137.5 609 V618 M138.5 609 V615 M139.5 607 V619 M140.5 607 V619 M141.5 445 V613 M142.5 445 V581 M143.5 562 V601 M144.5 582 V601 M145.5 583 V601 M146.5 598 V606 M147.5 600 V606 M148.5 600 V602 M149.5 600 V606 M150.5 603 V611 M151.5 592 V611 M152.5 592 V603 M153.5 594 V603 M154.5 597 V606 M155.5 596 V606 M156.5 595 V605 M157.5 600 V603 M158.5 594 V601 M159.5 592 V605 M160.5 592 V605 M161.5 602 V605 M162.5 600 V605 M163.5 601 V611 M164.5 589 V611 M165.5 589 V601 M166.5 598 V601 M167.5 598 V601 M168.5 593 V611 M169.5 601 V611 M170.5 591 V602 M171.5 599 V603 M172.5 599 V603 M173.5 591 V603 M174.5 591 V607 M175.5 598 V607 M176.5 598 V604 M177.5 603 V614 M178.5 599 V609 M179.5 599 V606 M180.5 596 V606 M181.5 596 V600 M182.5 599 V605 M183.5 601 V604 M184.5 598 V603 M185.5 598 V604 M186.5 592 V608 M187.5 592 V600 M188.5 599 V602 M189.5 591 V605 M190.5 599 V606 M191.5 599 V602 M192.5 601 V604 M193.5 595 V604 M194.5 595 V596 M195.5 595 V604 M196.5 595 V604 M197.5 594 V604 M198.5 591 V600 M199.5 591 V609 M200.5 593 V611 M201.5 599 V611 M202.5 596 V603 M203.5 596 V607 M204.5 601 V607 M205.5 591 V607 M206.5 591 V603 M207.5 599 V613 M208.5 599 V613 M209.5 599 V608 M210.5 600 V608 M211.5 601 V605 M212.5 601 V607 M213.5 601 V609 M214.5 599 V608 M215.5 599 V602 M216.5 601 V603 M217.5 595 V605 M218.5 595 V601 M219.5 597 V612 M220.5 590 V611 M221.5 590 V601 M222.5 596 V604 M223.5 595 V604 M224.5 599 V612 M225.5 594 V612 M226.5 594 V610 M227.5 592 V603 M228.5 592 V601 M229.5 593 V611 M230.5 595 V608 M231.5 597 V606 M232.5 597 V602 M233.5 599 V604 M234.5 593 V604 M235.5 594 V612 M236.5 598 V612 M237.5 598 V606 M238.5 598 V602 M239.5 601 V605 M240.5 598 V608 M241.5 601 V608 M242.5 592 V602 M243.5 592 V597 M244.5 595 V598 M245.5 589 V597 M246.5 589 V604 M247.5 594 V599 M248.5 594 V599 M249.5 590 V599 M250.5 590 V596 M251.5 593 V598 M252.5 588 V600 M253.5 587 V600 M254.5 593 V598 M255.5 592 V598 M256.5 594 V597 M257.5 589 V599 M258.5 589 V599 M259.5 589 V597 M260.5 589 V594 M261.5 592 V595 M262.5 589 V594 M263.5 593 V595 M264.5 594 V604 M265.5 585 V604 M266.5 585 V602 M267.5 592 V599 M268.5 595 V599 M269.5 588 V596 M270.5 591 V595 M271.5 588 V596 M272.5 595 V600 M273.5 597 V602 M274.5 590 V602 M275.5 590 V599 M276.5 591 V599 M277.5 591 V601 M278.5 592 V602 M279.5 594 V602 M280.5 586 V595 M281.5 592 V597 M282.5 595 V602 M283.5 590 V598 M284.5 587 V598 M285.5 587 V595 M286.5 588 V595 M287.5 588 V599 M288.5 586 V599 M289.5 593 V596 M290.5 592 V601 M291.5 586 V601 M292.5 592 V599 M293.5 586 V593 M294.5 585 V590 M295.5 583 V592 M296.5 583 V592 M297.5 583 V589 M298.5 586 V589 M299.5 583 V587 M300.5 581 V585 M301.5 584 V587 M302.5 584 V587 M303.5 584 V588 M304.5 575 V598 M305.5 566 V601 M306.5 589 V591 M307.5 580 V592 M308.5 580 V590 M309.5 588 V598 M310.5 588 V601 M311.5 586 V593 M312.5 586 V599 M313.5 588 V599 M314.5 586 V594 M315.5 588 V594 M316.5 589 V597 M317.5 577 V597 M318.5 577 V592 M319.5 585 V588 M320.5 585 V598 M321.5 588 V598 M322.5 577 V589 M323.5 580 V600 M324.5 581 V600 M325.5 584 V598 M326.5 579 V588 M327.5 586 V589 M328.5 588 V590 M329.5 582 V589 M330.5 582 V592 M331.5 575 V592 M332.5 576 V585 M333.5 579 V582 M334.5 579 V588 M335.5 583 V589 M336.5 579 V588 M337.5 581 V588 M338.5 581 V595 M339.5 583 V586 M340.5 583 V584 M341.5 583 V591 M342.5 582 V587 M343.5 583 V589 M344.5 587 V599 M345.5 588 V599 M346.5 586 V592 M347.5 578 V589 M348.5 578 V587 M349.5 582 V596 M350.5 575 V583 M351.5 575 V587 M352.5 582 V587 M353.5 582 V584 M354.5 582 V591 M355.5 582 V590 M356.5 583 V590 M357.5 573 V597 M358.5 581 V597 M359.5 589 V594 M360.5 580 V590 M361.5 575 V586 M362.5 575 V597 M363.5 585 V597 M364.5 580 V587 M365.5 579 V581 M366.5 579 V588 M367.5 579 V593" stroke="#fff" stroke-width="1" fill="none" shape-rendering="crispEdges"/><rect x="367" y="588" width="201" height="1" fill="#fff"/><line x1="568.5" y1="412" x2="568.5" y2="636" stroke="#fff" stroke-width="1.3"/><line x1="6" y1="635.5" x2="569" y2="635.5" stroke="#fff" stroke-width="1.3"/><line x1="6.5" y1="635" x2="6.5" y2="665" stroke="#fff" stroke-width="1.2"/><path d="M568 412.9 L577 416.4 L568 419.9 Z" fill="#fff"/><line x1="568" y1="430.3" x2="573" y2="430.3" stroke="#fff" stroke-width="1.2"/><path d="M568 440.6 L577 444.1 L568 447.6 Z" fill="#fff"/><line x1="568" y1="458.0" x2="573" y2="458.1" stroke="#fff" stroke-width="1.2"/><path d="M568 468.4 L577 471.9 L568 475.4 Z" fill="#fff"/><line x1="568" y1="485.8" x2="573" y2="485.8" stroke="#fff" stroke-width="1.2"/><path d="M568 496.1 L577 499.6 L568 503.1 Z" fill="#fff"/><line x1="568" y1="513.5" x2="573" y2="513.6" stroke="#fff" stroke-width="1.2"/><path d="M568 523.9 L577 527.4 L568 530.9 Z" fill="#fff"/><line x1="568" y1="541.3" x2="573" y2="541.3" stroke="#fff" stroke-width="1.2"/><path d="M568 551.6 L577 555.1 L568 558.6 Z" fill="#fff"/><line x1="568" y1="569.0" x2="573" y2="569.1" stroke="#fff" stroke-width="1.2"/><path d="M568 579.4 L577 582.9 L568 586.4 Z" fill="#fff"/><line x1="568" y1="596.8" x2="573" y2="596.8" stroke="#fff" stroke-width="1.2"/><path d="M568 607.1 L577 610.6 L568 614.1 Z" fill="#fff"/><line x1="568" y1="624.5" x2="573" y2="624.6" stroke="#fff" stroke-width="1.2"/><line x1="96.5" y1="635" x2="96.5" y2="639" stroke="#fff" stroke-width="1.2"/><line x1="184.5" y1="635" x2="184.5" y2="639" stroke="#fff" stroke-width="1.2"/><line x1="274.5" y1="635" x2="274.5" y2="639" stroke="#fff" stroke-width="1.2"/><line x1="363.5" y1="635" x2="363.5" y2="639" stroke="#fff" stroke-width="1.2"/><line x1="452.5" y1="635" x2="452.5" y2="639" stroke="#fff" stroke-width="1.2"/><line x1="51.5" y1="635" x2="51.5" y2="638" stroke="#fff" stroke-width="1.2"/><line x1="141.5" y1="635" x2="141.5" y2="638" stroke="#fff" stroke-width="1.2"/><line x1="230.5" y1="635" x2="230.5" y2="638" stroke="#fff" stroke-width="1.2"/><line x1="318.5" y1="635" x2="318.5" y2="638" stroke="#fff" stroke-width="1.2"/><line x1="496.5" y1="635" x2="496.5" y2="638" stroke="#fff" stroke-width="1.2"/><rect x="406" y="635" width="3" height="4" fill="#fff"/></svg>
<div class="a " style="left:577.3px;top:411.9px;font-size:13.3px;line-height:16px;color:#f0f0f0;">3.80</div>
<div class="a " style="left:577.3px;top:437.34999999999997px;font-size:13.3px;line-height:16px;color:#f0f0f0;">3.60</div>
<div class="a " style="left:577.3px;top:465.09999999999997px;font-size:13.3px;line-height:16px;color:#f0f0f0;">3.40</div>
<div class="a " style="left:577.3px;top:492.84999999999997px;font-size:13.3px;line-height:16px;color:#f0f0f0;">3.20</div>
<div class="a " style="left:577.3px;top:520.6px;font-size:13.3px;line-height:16px;color:#f0f0f0;">3.00</div>
<div class="a " style="left:577.3px;top:548.35px;font-size:13.3px;line-height:16px;color:#f0f0f0;">2.80</div>
<div class="a " style="left:577.3px;top:576.1px;font-size:13.3px;line-height:16px;color:#f0f0f0;">2.60</div>
<div class="a " style="left:577.3px;top:603.85px;font-size:13.3px;line-height:16px;color:#f0f0f0;">2.40</div>
<div class="a " style="left:22.299999999999997px;width:60px;top:636.8px;font-size:13.6px;line-height:14px;color:#f0f0f0;text-align:center;">08:00</div>
<div class="a " style="left:112.30000000000001px;width:60px;top:636.8px;font-size:13.6px;line-height:14px;color:#f0f0f0;text-align:center;">12:00</div>
<div class="a " style="left:201.3px;width:60px;top:636.8px;font-size:13.6px;line-height:14px;color:#f0f0f0;text-align:center;">16:00</div>
<div class="a " style="left:289.3px;width:60px;top:636.8px;font-size:13.6px;line-height:14px;color:#f0f0f0;text-align:center;">20:00</div>
<div class="a " style="left:379.3px;width:60px;top:636.8px;font-size:13.6px;line-height:14px;color:#f0f0f0;text-align:center;">00:00</div>
<div class="a " style="left:467.3px;width:60px;top:636.8px;font-size:13.6px;line-height:14px;color:#f0f0f0;text-align:center;">04:00</div>
<div class="a " style="left:73.0px;width:400px;top:649px;font-size:13px;line-height:16px;color:#f0f0f0;text-align:center;">23 10月 2023</div>
<div class="a " style="left:367.5px;top:588.5px;font-size:10.5px;line-height:12px;color:#e8e8e8;transform:scaleX(0.88);transform-origin:left center;">2.5611</div>
<div class="a" style="left:10px;top:417px;width:166px;height:26px;background:rgba(17,17,17,0.78);border-radius:2px;"></div>
<div class="a" style="left:18px;top:424px;width:11px;height:11px;background:#fff;"></div>
<div class="a " style="left:34px;top:422px;font-size:13px;line-height:16px;color:#f0f0f0;transform:scaleX(0.91);transform-origin:left center;word-spacing:3px;">GVLQUSD Index 2.5611</div>
<div class="a" style="left:211px;top:413px;width:58px;height:20px;background:rgba(34,34,34,0.55);"></div>
<div class="a" style="left:271px;top:413px;width:58px;height:20px;background:rgba(34,34,34,0.55);"></div>
<div class="a" style="left:331px;top:413px;width:58px;height:20px;background:rgba(34,34,34,0.55);"></div>
<svg class="a" style="left:217px;top:415px" width="160" height="16" viewBox="0 0 160 16"><circle cx="7" cy="7" r="3.5" stroke="#808080" fill="none" stroke-width="1"/><path d="M7 1 V13 M1 7 H13" stroke="#808080" stroke-width="1"/><path d="M63 11.5 L71 4.5 M62 12.5 H68" stroke="#808080" stroke-width="1.3"/><circle cx="125" cy="6" r="3.6" stroke="#808080" fill="none" stroke-width="1.3"/><path d="M127.8 8.8 L131.5 12.5" stroke="#808080" stroke-width="1.8"/></svg>
<div class="a l" style="left:237.5px;top:413.3px;font-size:13.5px;line-height:18px;color:#8e8e8e;">追踪</div>
<div class="a l" style="left:298px;top:413.3px;font-size:13.5px;line-height:18px;color:#8e8e8e;">注释</div>
<div class="a l" style="left:358px;top:413.3px;font-size:13.5px;line-height:18px;color:#8e8e8e;">缩放</div>
<div class="a" style="left:729px;top:389px;width:484px;height:23px;background:#202020"></div>
<div class="a" style="left:616px;top:390px;width:96px;height:21px;background:#ffa12a;border-bottom:1px solid #3a1a10;"></div>
<div class="a l" style="left:618px;top:390px;font-size:18px;line-height:22px;color:#111;">流动性</div>
<div class="a" style="left:712px;top:390px;width:16px;height:21px;background:linear-gradient(#4a4a4a 0,#4a4a4a 2px,#3e3e3e 2px);"></div>
<div class="a" style="left:717.5px;top:398.3px;width:0;height:0;border-left:3.0px solid transparent;border-right:3.0px solid transparent;border-top:4.5px solid #e8e8e8"></div>
<div class="a " style="left:732px;top:389px;font-size:19px;line-height:22px;color:#9aa6b8;transform:scaleX(0.72);transform-origin:left center;">9)</div>
<div class="a l" style="left:748px;top:389.5px;font-size:18px;line-height:22px;color:#fff;">国债流动性指数</div>
<svg class="a" style="left:608px;top:0px" width="612" height="673" viewBox="0 0 612 673"><line x1="6.5" y1="412" x2="6.5" y2="635" stroke="#7a7a7a" stroke-dasharray="2 2"/><line x1="51.5" y1="412" x2="51.5" y2="635" stroke="#7a7a7a" stroke-dasharray="2 2"/><line x1="141.5" y1="412" x2="141.5" y2="635" stroke="#7a7a7a" stroke-dasharray="2 2"/><line x1="230.5" y1="412" x2="230.5" y2="635" stroke="#7a7a7a" stroke-dasharray="2 2"/><line x1="318.5" y1="412" x2="318.5" y2="635" stroke="#7a7a7a" stroke-dasharray="2 2"/><line x1="496.5" y1="412" x2="496.5" y2="635" stroke="#7a7a7a" stroke-dasharray="2 2"/><line x1="407.5" y1="412" x2="407.5" y2="635" stroke="#777"/><line x1="6" y1="416.5" x2="568" y2="416.5" stroke="#7a7a7a" stroke-dasharray="2 2"/><line x1="6" y1="444.5" x2="568" y2="444.5" stroke="#7a7a7a" stroke-dasharray="2 2"/><line x1="6" y1="471.5" x2="568" y2="471.5" stroke="#7a7a7a" stroke-dasharray="2 2"/><line x1="6" y1="499.5" x2="568" y2="499.5" stroke="#7a7a7a" stroke-dasharray="2 2"/><line x1="6" y1="527.5" x2="568" y2="527.5" stroke="#7a7a7a" stroke-dasharray="2 2"/><line x1="6" y1="555.5" x2="568" y2="555.5" stroke="#7a7a7a" stroke-dasharray="2 2"/><line x1="6" y1="583.5" x2="568" y2="583.5" stroke="#7a7a7a" stroke-dasharray="2 2"/><line x1="6" y1="611.5" x2="568" y2="611.5" stroke="#7a7a7a" stroke-dasharray="2 2"/><path d="M50.5 598 V607 M51.5 436 V605 M52.5 572 V599 M53.5 598 V608 M54.5 601 V606 M55.5 601 V607 M56.5 605 V608 M57.5 604 V609 M58.5 597 V605 M59.5 598 V603 M60.5 596 V603 M61.5 596 V606 M62.5 599 V604 M63.5 599 V610 M64.5 608 V609 M65.5 597 V609 M66.5 597 V610 M67.5 607 V614 M68.5 598 V614 M69.5 598 V604 M70.5 597 V607 M71.5 597 V609 M72.5 608 V611 M73.5 600 V611 M74.5 588 V603 M75.5 599 V604 M76.5 599 V607 M77.5 599 V609 M78.5 595 V609 M79.5 592 V614 M80.5 592 V607 M81.5 604 V611 M82.5 601 V605 M83.5 601 V604 M84.5 593 V602 M85.5 593 V603 M86.5 600 V603 M87.5 594 V601 M88.5 594 V603 M89.5 594 V608 M90.5 600 V608 M91.5 595 V601 M92.5 595 V601 M93.5 594 V607 M94.5 594 V611 M95.5 597 V611 M96.5 597 V603 M97.5 602 V611 M98.5 602 V615 M99.5 596 V611 M100.5 595 V611 M101.5 595 V608 M102.5 599 V608 M103.5 598 V602 M104.5 593 V606 M105.5 593 V604 M106.5 603 V616 M107.5 606 V610 M108.5 603 V607 M109.5 601 V605 M110.5 599 V606 M111.5 599 V606 M112.5 604 V612 M113.5 593 V612 M114.5 610 V615 M115.5 602 V615 M116.5 597 V611 M117.5 610 V618 M118.5 602 V618 M119.5 600 V604 M120.5 600 V608 M121.5 603 V609 M122.5 606 V609 M123.5 603 V607 M124.5 604 V608 M125.5 605 V617 M126.5 605 V619 M127.5 605 V619 M128.5 595 V606 M129.5 603 V608 M130.5 599 V608 M131.5 599 V615 M132.5 596 V616 M133.5 596 V608 M134.5 599 V608 M135.5 604 V608 M136.5 605 V610 M137.5 609 V618 M138.5 609 V615 M139.5 607 V619 M140.5 607 V619 M141.5 445 V613 M142.5 445 V581 M143.5 562 V601 M144.5 582 V601 M145.5 583 V601 M146.5 598 V606 M147.5 600 V606 M148.5 600 V602 M149.5 600 V606 M150.5 603 V611 M151.5 592 V611 M152.5 592 V603 M153.5 594 V603 M154.5 597 V606 M155.5 596 V606 M156.5 595 V605 M157.5 600 V603 M158.5 594 V601 M159.5 592 V605 M160.5 592 V605 M161.5 602 V605 M162.5 600 V605 M163.5 601 V611 M164.5 589 V611 M165.5 589 V601 M166.5 598 V601 M167.5 598 V601 M168.5 593 V611 M169.5 601 V611 M170.5 591 V602 M171.5 599 V603 M172.5 599 V603 M173.5 591 V603 M174.5 591 V607 M175.5 598 V607 M176.5 598 V604 M177.5 603 V614 M178.5 599 V609 M179.5 599 V606 M180.5 596 V606 M181.5 596 V600 M182.5 599 V605 M183.5 601 V604 M184.5 598 V603 M185.5 598 V604 M186.5 592 V608 M187.5 592 V600 M188.5 599 V602 M189.5 591 V605 M190.5 599 V606 M191.5 599 V602 M192.5 601 V604 M193.5 595 V604 M194.5 595 V596 M195.5 595 V604 M196.5 595 V604 M197.5 594 V604 M198.5 591 V600 M199.5 591 V609 M200.5 593 V611 M201.5 599 V611 M202.5 596 V603 M203.5 596 V607 M204.5 601 V607 M205.5 591 V607 M206.5 591 V603 M207.5 599 V613 M208.5 599 V613 M209.5 599 V608 M210.5 600 V608 M211.5 601 V605 M212.5 601 V607 M213.5 601 V609 M214.5 599 V608 M215.5 599 V602 M216.5 601 V603 M217.5 595 V605 M218.5 595 V601 M219.5 597 V612 M220.5 590 V611 M221.5 590 V601 M222.5 596 V604 M223.5 595 V604 M224.5 599 V612 M225.5 594 V612 M226.5 594 V610 M227.5 592 V603 M228.5 592 V601 M229.5 593 V611 M230.5 595 V608 M231.5 597 V606 M232.5 597 V602 M233.5 599 V604 M234.5 593 V604 M235.5 594 V612 M236.5 598 V612 M237.5 598 V606 M238.5 598 V602 M239.5 601 V605 M240.5 598 V608 M241.5 601 V608 M242.5 592 V602 M243.5 592 V597 M244.5 595 V598 M245.5 589 V597 M246.5 589 V604 M247.5 594 V599 M248.5 594 V599 M249.5 590 V599 M250.5 590 V596 M251.5 593 V598 M252.5 588 V600 M253.5 587 V600 M254.5 593 V598 M255.5 592 V598 M256.5 594 V597 M257.5 589 V599 M258.5 589 V599 M259.5 589 V597 M260.5 589 V594 M261.5 592 V595 M262.5 589 V594 M263.5 593 V595 M264.5 594 V604 M265.5 585 V604 M266.5 585 V602 M267.5 592 V599 M268.5 595 V599 M269.5 588 V596 M270.5 591 V595 M271.5 588 V596 M272.5 595 V600 M273.5 597 V602 M274.5 590 V602 M275.5 590 V599 M276.5 591 V599 M277.5 591 V601 M278.5 592 V602 M279.5 594 V602 M280.5 586 V595 M281.5 592 V597 M282.5 595 V602 M283.5 590 V598 M284.5 587 V598 M285.5 587 V595 M286.5 588 V595 M287.5 588 V599 M288.5 586 V599 M289.5 593 V596 M290.5 592 V601 M291.5 586 V601 M292.5 592 V599 M293.5 586 V593 M294.5 585 V590 M295.5 583 V592 M296.5 583 V592 M297.5 583 V589 M298.5 586 V589 M299.5 583 V587 M300.5 581 V585 M301.5 584 V587 M302.5 584 V587 M303.5 584 V588 M304.5 575 V598 M305.5 566 V601 M306.5 589 V591 M307.5 580 V592 M308.5 580 V590 M309.5 588 V598 M310.5 588 V601 M311.5 586 V593 M312.5 586 V599 M313.5 588 V599 M314.5 586 V594 M315.5 588 V594 M316.5 589 V597 M317.5 577 V597 M318.5 577 V592 M319.5 585 V588 M320.5 585 V598 M321.5 588 V598 M322.5 577 V589 M323.5 580 V600 M324.5 581 V600 M325.5 584 V598 M326.5 579 V588 M327.5 586 V589 M328.5 588 V590 M329.5 582 V589 M330.5 582 V592 M331.5 575 V592 M332.5 576 V585 M333.5 579 V582 M334.5 579 V588 M335.5 583 V589 M336.5 579 V588 M337.5 581 V588 M338.5 581 V595 M339.5 583 V586 M340.5 583 V584 M341.5 583 V591 M342.5 582 V587 M343.5 583 V589 M344.5 587 V599 M345.5 588 V599 M346.5 586 V592 M347.5 578 V589 M348.5 578 V587 M349.5 582 V596 M350.5 575 V583 M351.5 575 V587 M352.5 582 V587 M353.5 582 V584 M354.5 582 V591 M355.5 582 V590 M356.5 583 V590 M357.5 573 V597 M358.5 581 V597 M359.5 589 V594 M360.5 580 V590 M361.5 575 V586 M362.5 575 V597 M363.5 585 V597 M364.5 580 V587 M365.5 579 V581 M366.5 579 V588 M367.5 579 V593" stroke="#fff" stroke-width="1" fill="none" shape-rendering="crispEdges"/><rect x="367" y="588" width="201" height="1" fill="#fff"/><line x1="568.5" y1="412" x2="568.5" y2="636" stroke="#fff" stroke-width="1.3"/><line x1="6" y1="635.5" x2="569" y2="635.5" stroke="#fff" stroke-width="1.3"/><line x1="6.5" y1="635" x2="6.5" y2="665" stroke="#fff" stroke-width="1.2"/><path d="M568 412.9 L577 416.4 L568 419.9 Z" fill="#fff"/><line x1="568" y1="430.3" x2="573" y2="430.3" stroke="#fff" stroke-width="1.2"/><path d="M568 440.6 L577 444.1 L568 447.6 Z" fill="#fff"/><line x1="568" y1="458.0" x2="573" y2="458.1" stroke="#fff" stroke-width="1.2"/><path d="M568 468.4 L577 471.9 L568 475.4 Z" fill="#fff"/><line x1="568" y1="485.8" x2="573" y2="485.8" stroke="#fff" stroke-width="1.2"/><path d="M568 496.1 L577 499.6 L568 503.1 Z" fill="#fff"/><line x1="568" y1="513.5" x2="573" y2="513.6" stroke="#fff" stroke-width="1.2"/><path d="M568 523.9 L577 527.4 L568 530.9 Z" fill="#fff"/><line x1="568" y1="541.3" x2="573" y2="541.3" stroke="#fff" stroke-width="1.2"/><path d="M568 551.6 L577 555.1 L568 558.6 Z" fill="#fff"/><line x1="568" y1="569.0" x2="573" y2="569.1" stroke="#fff" stroke-width="1.2"/><path d="M568 579.4 L577 582.9 L568 586.4 Z" fill="#fff"/><line x1="568" y1="596.8" x2="573" y2="596.8" stroke="#fff" stroke-width="1.2"/><path d="M568 607.1 L577 610.6 L568 614.1 Z" fill="#fff"/><line x1="568" y1="624.5" x2="573" y2="624.6" stroke="#fff" stroke-width="1.2"/><line x1="96.5" y1="635" x2="96.5" y2="639" stroke="#fff" stroke-width="1.2"/><line x1="184.5" y1="635" x2="184.5" y2="639" stroke="#fff" stroke-width="1.2"/><line x1="274.5" y1="635" x2="274.5" y2="639" stroke="#fff" stroke-width="1.2"/><line x1="363.5" y1="635" x2="363.5" y2="639" stroke="#fff" stroke-width="1.2"/><line x1="452.5" y1="635" x2="452.5" y2="639" stroke="#fff" stroke-width="1.2"/><line x1="51.5" y1="635" x2="51.5" y2="638" stroke="#fff" stroke-width="1.2"/><line x1="141.5" y1="635" x2="141.5" y2="638" stroke="#fff" stroke-width="1.2"/><line x1="230.5" y1="635" x2="230.5" y2="638" stroke="#fff" stroke-width="1.2"/><line x1="318.5" y1="635" x2="318.5" y2="638" stroke="#fff" stroke-width="1.2"/><line x1="496.5" y1="635" x2="496.5" y2="638" stroke="#fff" stroke-width="1.2"/><rect x="406" y="635" width="3" height="4" fill="#fff"/></svg>
<div class="a " style="left:1185.3px;top:411.9px;font-size:13.3px;line-height:16px;color:#f0f0f0;">3.80</div>
<div class="a " style="left:1185.3px;top:437.34999999999997px;font-size:13.3px;line-height:16px;color:#f0f0f0;">3.60</div>
<div class="a " style="left:1185.3px;top:465.09999999999997px;font-size:13.3px;line-height:16px;color:#f0f0f0;">3.40</div>
<div class="a " style="left:1185.3px;top:492.84999999999997px;font-size:13.3px;line-height:16px;color:#f0f0f0;">3.20</div>
<div class="a " style="left:1185.3px;top:520.6px;font-size:13.3px;line-height:16px;color:#f0f0f0;">3.00</div>
<div class="a " style="left:1185.3px;top:548.35px;font-size:13.3px;line-height:16px;color:#f0f0f0;">2.80</div>
<div class="a " style="left:1185.3px;top:576.1px;font-size:13.3px;line-height:16px;color:#f0f0f0;">2.60</div>
<div class="a " style="left:1185.3px;top:603.85px;font-size:13.3px;line-height:16px;color:#f0f0f0;">2.40</div>
<div class="a " style="left:630.3px;width:60px;top:636.8px;font-size:13.6px;line-height:14px;color:#f0f0f0;text-align:center;">08:00</div>
<div class="a " style="left:720.3px;width:60px;top:636.8px;font-size:13.6px;line-height:14px;color:#f0f0f0;text-align:center;">12:00</div>
<div class="a " style="left:809.3px;width:60px;top:636.8px;font-size:13.6px;line-height:14px;color:#f0f0f0;text-align:center;">16:00</div>
<div class="a " style="left:897.3px;width:60px;top:636.8px;font-size:13.6px;line-height:14px;color:#f0f0f0;text-align:center;">20:00</div>
<div class="a " style="left:987.3px;width:60px;top:636.8px;font-size:13.6px;line-height:14px;color:#f0f0f0;text-align:center;">00:00</div>
<div class="a " style="left:1075.3px;width:60px;top:636.8px;font-size:13.6px;line-height:14px;color:#f0f0f0;text-align:center;">04:00</div>
<div class="a " style="left:681.0px;width:400px;top:649px;font-size:13px;line-height:16px;color:#f0f0f0;text-align:center;">23 10月 2023</div>
<div class="a " style="left:975.5px;top:588.5px;font-size:10.5px;line-height:12px;color:#e8e8e8;transform:scaleX(0.88);transform-origin:left center;">2.5606</div>
<div class="a" style="left:618px;top:417px;width:166px;height:26px;background:rgba(17,17,17,0.78);border-radius:2px;"></div>
<div class="a" style="left:626px;top:424px;width:11px;height:11px;background:#fff;"></div>
<div class="a " style="left:642px;top:422px;font-size:13px;line-height:16px;color:#f0f0f0;transform:scaleX(0.91);transform-origin:left center;word-spacing:3px;">GVLQUSD Index 2.5606</div>
<div class="a" style="left:819px;top:413px;width:58px;height:20px;background:rgba(34,34,34,0.55);"></div>
<div class="a" style="left:879px;top:413px;width:58px;height:20px;background:rgba(34,34,34,0.55);"></div>
<div class="a" style="left:939px;top:413px;width:58px;height:20px;background:rgba(34,34,34,0.55);"></div>
<svg class="a" style="left:825px;top:415px" width="160" height="16" viewBox="0 0 160 16"><circle cx="7" cy="7" r="3.5" stroke="#808080" fill="none" stroke-width="1"/><path d="M7 1 V13 M1 7 H13" stroke="#808080" stroke-width="1"/><path d="M63 11.5 L71 4.5 M62 12.5 H68" stroke="#808080" stroke-width="1.3"/><circle cx="125" cy="6" r="3.6" stroke="#808080" fill="none" stroke-width="1.3"/><path d="M127.8 8.8 L131.5 12.5" stroke="#808080" stroke-width="1.8"/></svg>
<div class="a l" style="left:845.5px;top:413.3px;font-size:13.5px;line-height:18px;color:#8e8e8e;">追踪</div>
<div class="a l" style="left:906px;top:413.3px;font-size:13.5px;line-height:18px;color:#8e8e8e;">注释</div>
<div class="a l" style="left:966px;top:413.3px;font-size:13.5px;line-height:18px;color:#8e8e8e;">缩放</div></body></html>
